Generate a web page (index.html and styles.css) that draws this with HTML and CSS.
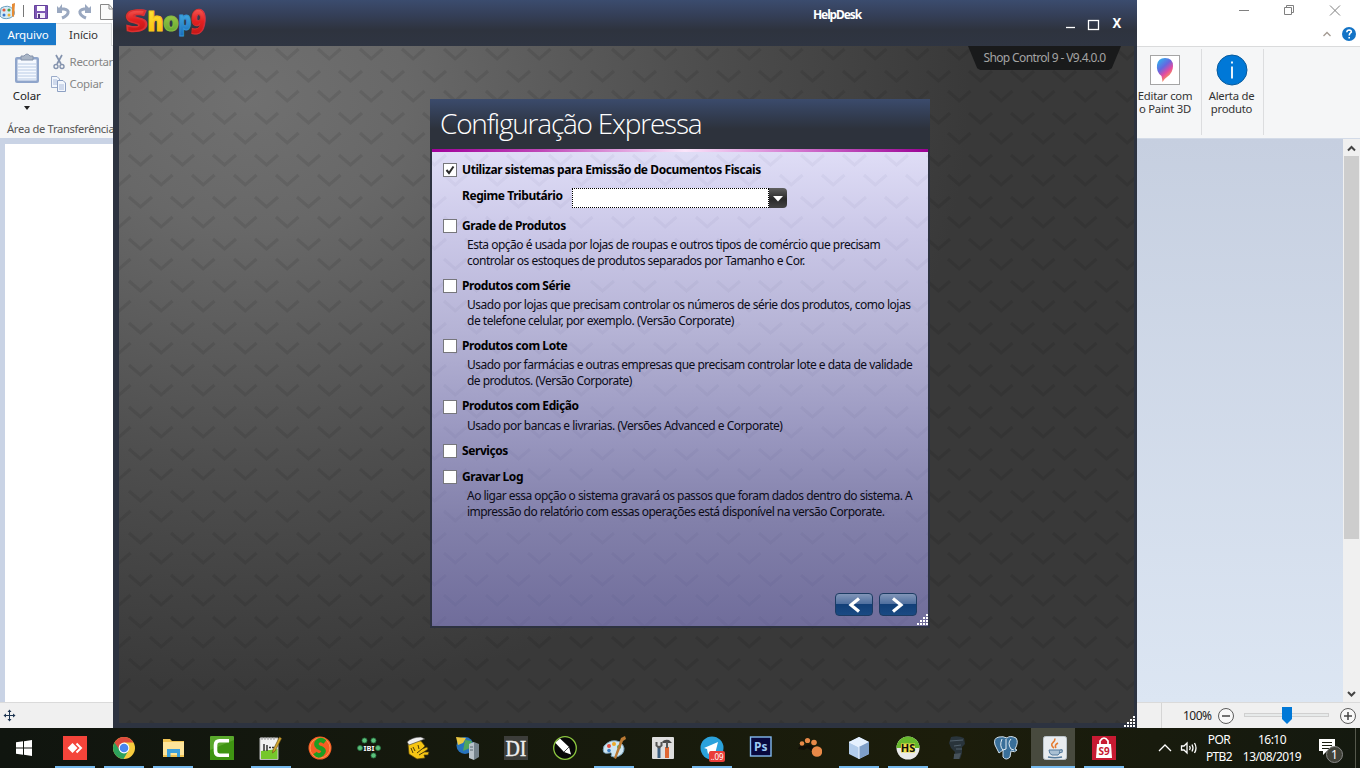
FILE: index.html
```html
<!DOCTYPE html>
<html lang="pt-BR">
<head>
<meta charset="utf-8">
<title>Shop Control 9</title>
<link rel="stylesheet" href="styles.css">
</head>
<body>
<div class="desktop">
  <div class="windows">
    <section class="paint-left">
      <div class="quickbar">
        <svg class="qi" width="113" height="23" viewBox="0 0 113 23">
          <path d="M1 8Q8 4 13 9Q17 15 10 18Q3 20 0 16Z" fill="#d5ebf6" stroke="#6a9fc0"/>
          <circle cx="4" cy="10" r="1.600" fill="#e25d3f"/><circle cx="9" cy="10" r="1.600" fill="#4aa34d"/><circle cx="4" cy="15" r="1.500" fill="#3b74c8"/><circle cx="9" cy="15" r="1.500" fill="#edb12f"/>
          <path d="M12 4L15 3L14 17L12 16Z" fill="#e58a35"/>
          <path d="M23.500 5V17" stroke="#777"/>
          <path d="M34.500 5.500H47.500V18.500H34.500Z" fill="#7e57b5" stroke="#65419b"/><rect x="37" y="6" width="8" height="5" fill="#fff"/><rect x="37" y="13" width="8" height="5" fill="#f1edf7"/><rect x="38" y="14" width="2" height="4" fill="#543982"/>
          <path d="M60 9H64Q69 10 68 13Q67 16 62 18" fill="none" stroke="#9aa8c0" stroke-width="3"/><path d="M62 4V13H57V6L59 8Z" fill="#9aa8c0"/>
          <path d="M88 9H84Q79 10 80 13Q81 16 86 18" fill="none" stroke="#9aa8c0" stroke-width="3"/><path d="M85 4V13H91V6L89 8Z" fill="#9aa8c0"/>
          <path d="M100.500 4.500H109L113 9V19.500H100.500Z" fill="#fafafa" stroke="#888"/><path d="M109 4.500V9H113" fill="none" stroke="#888"/>
        </svg>
      </div>
      <div class="tabs"><span class="tab-file">Arquivo</span><span class="tab-home">Início</span></div>
      <div class="ribbon">
        <div class="clip">
          <div class="paste">
            <svg width="26" height="32" viewBox="0 0 26 32"><rect x="1" y="4" width="24" height="26" rx="2" fill="#8fa5cb"/><rect x="3.500" y="6.500" width="19" height="21" fill="#f5f9ff"/><path d="M4 11H22M4 14H22M4 17H22M4 20H22M4 23H22M4 26H22" stroke="#b9cbe5"/><path d="M7 7V3H10Q13-1 16 3H19V7Z" fill="#a9b5c6" stroke="#8492aa"/></svg>
            <span>Colar</span>
            <svg width="6" height="4" viewBox="0 0 6 4"><path d="M0 0H6L3 4Z" fill="#222"/></svg>
          </div>
          <div class="edits">
            <div class="edit"><svg width="16" height="16" viewBox="0 0 16 16"><path d="M5 1L10 10M11 1L6 10" stroke="#8493ae" stroke-width="1.700"/><circle cx="5" cy="12.500" r="2" fill="none" stroke="#8493ae" stroke-width="1.400"/><circle cx="11" cy="12.500" r="2" fill="none" stroke="#8493ae" stroke-width="1.400"/></svg><span>Recortar</span></div>
            <div class="edit"><svg width="16" height="16" viewBox="0 0 16 16"><path d="M.5.500H6L8.500 3V11.500H.500Z" fill="#f3f7fd" stroke="#9aabc9"/><path d="M6.500 4.500H12L14.500 7V15.500H6.500Z" fill="#f3f7fd" stroke="#8da0c3"/><path d="M2 4H6M2 6H6M2 8H6M8 9H13M8 11H13M8 13H13" stroke="#a9badb"/></svg><span>Copiar</span></div>
          </div>
        </div>
        <div class="group">Área de Transferência</div>
      </div>
      <div class="canvas-l"><div class="paper"></div></div>
      <div class="status"><svg width="20" height="26" viewBox="0 0 20 26"><path d="M4 12.500H15M9.500 7V18" stroke="#1d3552"/><path d="M7.500 9L9.500 6.500L11.500 9ZM7.500 16L9.500 18.500L11.500 16ZM6 10.500L3.500 12.500L6 14.500ZM13 10.500L15.500 12.500L13 14.500Z" fill="#1d3552"/></svg></div>
    </section>

    <section class="shop">
      <header class="shop-head">
        <svg class="logo" width="86" height="40" viewBox="0 0 86 40">
          <defs>
            <linearGradient id="lr" x2="0" y2="1"><stop stop-color="#ff8a80"/><stop offset=".5" stop-color="#e42020"/><stop offset="1" stop-color="#b01010"/></linearGradient>
            <linearGradient id="ly" x2="0" y2="1"><stop stop-color="#fff04a"/><stop offset="1" stop-color="#f9b400"/></linearGradient>
            <linearGradient id="lg" x2="0" y2="1"><stop stop-color="#c5dc50"/><stop offset="1" stop-color="#4b9d2c"/></linearGradient>
            <linearGradient id="lb" x2="0" y2="1"><stop stop-color="#57c8f2"/><stop offset="1" stop-color="#1567b8"/></linearGradient>
          </defs>
          <g class="logo-text">
            <text x="1" y="26" font-size="29" textLength="22" lengthAdjust="spacingAndGlyphs" fill="url(#lr)" stroke="#dc3030" stroke-width="1.500" transform="rotate(-4 12 16)">S</text>
            <text x="23.500" y="26" font-size="27" textLength="16" lengthAdjust="spacingAndGlyphs" fill="url(#ly)" stroke="#fac81a" stroke-width="1.200">h</text>
            <text x="39" y="25.500" font-size="26" textLength="16" lengthAdjust="spacingAndGlyphs" fill="url(#lg)" stroke="#86bb42" stroke-width="1">o</text>
            <text x="54.500" y="25" font-size="26" textLength="13" lengthAdjust="spacingAndGlyphs" fill="url(#lb)" stroke="#3294d8" stroke-width="1">p</text>
            <text x="66.500" y="29" font-size="34" textLength="15" lengthAdjust="spacingAndGlyphs" fill="url(#lr)" stroke="#dc3030" stroke-width="1" transform="rotate(5 74 17)">9</text>
          </g>
        </svg>
        <span class="helpdesk">HelpDesk</span>
        <svg class="winbtns" width="60" height="20" viewBox="0 0 60 20"><path d="M2 15.500H11" stroke="#fff" stroke-width="1.300"/><rect x="24.500" y="8.500" width="10" height="9" fill="none" stroke="#fff" stroke-width="1.300"/></svg>
        <span class="winx">X</span>
      </header>
      <div class="stage">
        <div class="ver"><span>Shop Control 9 - V9.4.0.0</span></div>
        <div class="dialog">
          <h1><span>Configuração Expressa</span></h1>
          <div class="stripe"></div>
          <div class="dbody">
            <div class="opt first"><i class="cb"><svg width="12" height="12" viewBox="0 0 12 12"><path d="M2.500 6L5 9L9.500 2.500" fill="none" stroke="#2b2b2b" stroke-width="2"/></svg></i><b>Utilizar sistemas para Emissão de Documentos Fiscais</b></div>
            <div class="regime"><b>Regime Tributário</b><div class="field"></div><div class="drop"><svg width="10" height="6" viewBox="0 0 10 6"><path d="M0 0H10L5 5.500Z" fill="#fff"/></svg></div></div>
            <div class="opt grade"><i class="cb"></i><b>Grade de Produtos</b></div>
            <p><span>Esta opção é usada por lojas de roupas e outros tipos de comércio que precisam</span><span>controlar os estoques de produtos separados por Tamanho e Cor.</span></p>
            <div class="opt"><i class="cb"></i><b>Produtos com Série</b></div>
            <p><span>Usado por lojas que precisam controlar os números de série dos produtos, como lojas</span><span>de telefone celular, por exemplo. (Versão Corporate)</span></p>
            <div class="opt"><i class="cb"></i><b>Produtos com Lote</b></div>
            <p class="lote"><span>Usado por farmácias e outras empresas que precisam controlar lote e data de validade</span><span>de produtos. (Versão Corporate)</span></p>
            <div class="opt edicao"><i class="cb"></i><b>Produtos com Edição</b></div>
            <p><span>Usado por bancas e livrarias. (Versões Advanced e Corporate)</span></p>
            <div class="opt"><i class="cb"></i><b>Serviços</b></div>
            <div class="opt gravar"><i class="cb"></i><b>Gravar Log</b></div>
            <p class="log"><span>Ao ligar essa opção o sistema gravará os passos que foram dados dentro do sistema. A</span><span>impressão do relatório com essas operações está disponível na versão Corporate.</span></p>
            <div class="nav">
              <div class="nbtn"><svg width="14" height="16" viewBox="0 0 14 16"><path d="M12 1.500L4 8L12 14.500" fill="none" stroke="#fff" stroke-width="3.200"/></svg></div>
              <div class="nbtn"><svg width="14" height="16" viewBox="0 0 14 16"><path d="M2 1.500L10 8L2 14.500" fill="none" stroke="#fff" stroke-width="3.200"/></svg></div>
            </div>
          </div>
          <svg class="grip" width="12" height="12" viewBox="0 0 12 12"><path d="M10 1h2M10 4h2M7 4h2M10 7h2M7 7h2M4 7h2M10 10h2M7 10h2M4 10h2M1 10h2" stroke="#fff" stroke-width="2"/></svg>
        </div>
      </div>
      <svg class="grip" width="12" height="12" viewBox="0 0 12 12"><path d="M10 1h2M10 4h2M7 4h2M10 7h2M7 7h2M4 7h2M10 10h2M7 10h2M4 10h2M1 10h2" stroke="#fff" stroke-width="2"/></svg>
    </section>

    <section class="paint-right">
      <svg class="caption" width="223" height="46" viewBox="0 0 223 46"><g fill="none" stroke="#808080"><path d="M102 10.500H112M147.500 7.500H154.500V14.500H147.500ZM149.500 7V5.500H156.500V12.500H155M193 5.500L203 15.500M203 5.500L193 15.500"/><path d="M186.500 36L190 32.500L193.500 36" stroke="#a39a92" stroke-width="1.300"/></g><circle cx="212" cy="34" r="7" fill="#1373c6"/><path d="M209.800 32.200Q210 30 212.200 30Q214.500 30.200 214.300 32.200Q212.200 33.700 212.200 35.500M212.200 37V38.600" fill="none" stroke="#fff" stroke-width="1.600"/></svg>
      <div class="ribbon-r">
        <div class="tool t3d"><svg width="32" height="32" viewBox="0 0 32 32"><defs><linearGradient id="p3" x1="0" y1="0" x2=".6" y2="1"><stop stop-color="#22c3f0"/><stop offset=".45" stop-color="#6667e0"/><stop offset=".7" stop-color="#e44ba0"/><stop offset="1" stop-color="#ffb13b"/></linearGradient></defs><rect x="1.500" y="1.500" width="29" height="29" fill="#fff" stroke="#a5a5a5"/><path d="M16 4Q24 4 24 12Q24 19 18 23Q15 25 13.500 28Q13 24 12.500 22Q7 18 8 11Q9 4 16 4Z" fill="url(#p3)"/></svg><span>Editar com<br>o Paint 3D</span></div>
        <div class="tool alerta"><svg width="32" height="32" viewBox="0 0 32 32"><circle cx="16" cy="16" r="15" fill="#0078d7" stroke="#075a9d"/><path d="M16 12.500V24.500M16 7.500V9.500" stroke="#fff" stroke-width="1.800"/></svg><span>Alerta de<br>produto</span></div>
      </div>
      <div class="canvas-r"><div class="void"></div><div class="sb"><svg width="17" height="18" viewBox="0 0 17 18"><path d="M5 11.500L8.500 8L12 11.500" fill="none" stroke="#444" stroke-width="2"/></svg><div class="thumb"></div><svg width="17" height="18" viewBox="0 0 17 18"><path d="M5 8L8.500 11.500L12 8" fill="none" stroke="#444" stroke-width="2"/></svg></div></div>
      <div class="status zoombar"><span>100%</span><svg width="147" height="26" viewBox="0 0 147 26"><g fill="#f8f8f8" stroke="#5c5c5c"><circle cx="14" cy="13" r="7.500"/><circle cx="136" cy="13" r="7.500"/></g><path d="M10 13H18M132 13H140M136 9V17" stroke="#444" stroke-width="1.500"/><rect x="32.500" y="10.500" width="84" height="3" fill="#e7eaea" stroke="#d0d0d0"/><path d="M70 4H80V16L75 21L70 16Z" fill="#0078d7"/></svg></div>
    </section>
  </div>

  <footer class="taskbar">
    <div class="start"><svg width="16" height="16" viewBox="0 0 16 16"><path d="M0 2.300L7 1.300V7.500H0ZM8 1.200L16 0V7.500H8ZM0 8.500H7V14.700L0 13.700ZM8 8.500H16V16L8 14.800Z" fill="#fff"/></svg></div>
    <div class="cell on"><svg viewBox="0 0 24 24"><rect width="24" height="24" fill="#f4443a"/><path d="M4.500 12L9.500 7L14.500 12L9.500 17Z" fill="#fff"/><path d="M13.500 7.500L18 12L13.500 16.500" fill="none" stroke="#fff" stroke-width="2"/></svg></div>
    <div class="cell on"><svg viewBox="0 0 24 24"><circle cx="12" cy="12" r="11" fill="#f7cb3e"/><path d="M12 12L2.500 6.500A11 11 0 0 1 21.500 6.500H12Z" fill="#dd4b3e"/><path d="M2.500 6.500A11 11 0 0 0 11.500 23L16.500 14.500L12 12Z" fill="#2da15c"/><path d="M2.500 6.500L7 13V9L12 6.500Z" fill="#dd4b3e"/><circle cx="12" cy="12" r="5.400" fill="#fff"/><circle cx="12" cy="12" r="4.300" fill="#4a86f0"/></svg></div>
    <div class="cell on"><svg viewBox="0 0 24 24"><path d="M2 3H9L11 5H23V21H2Z" fill="#f0c454"/><path d="M2 6H23V19H2Z" fill="#fde49a"/><path d="M6 21V13H19V21H16V17H9.500V21Z" fill="#3da0dc"/></svg></div>
    <div class="cell"><svg viewBox="0 0 24 24"><rect width="24" height="24" rx="1" fill="#5aa82c"/><path d="M0 24V14L24 4V24Z" fill="#3f9412"/><path d="M19 4.800H9.500Q5.500 4.800 5.500 9V15Q5.500 19.200 9.500 19.200H19" fill="none" stroke="#fff" stroke-width="3.600"/></svg></div>
    <div class="cell on"><svg viewBox="0 0 24 24"><path d="M1 2H19V23.500H1Z" fill="#f2f2f2" stroke="#b9b9b9"/><path d="M2 15L18.500 13V23H2Z" fill="#75c72b"/><path d="M3 1V4M6 1V4M9 1V4M12 1V4M15 1V4" stroke="#9a9a9a"/><path d="M5 8V15M8 9V15M10 11.500H12M13 11.500H15" stroke="#333" stroke-width="1.500"/><path d="M20.500 1L22.500 2.500L16 15L13.500 17L14 14Z" fill="#d6a82e" stroke="#6f5419" stroke-width=".7"/></svg></div>
    <div class="cell"><svg viewBox="0 0 24 24"><circle cx="12" cy="12" r="11.500" fill="#f45e22"/><circle cx="12" cy="12" r="10" fill="none" stroke="#ff9454"/><path d="M17 6Q12 2 9 6Q7 10 12 12Q18 14 14 18Q10 21 7 17" fill="none" stroke="#1d9d22" stroke-width="4.500"/></svg></div>
    <div class="cell"><svg viewBox="0 0 24 24"><g fill="#5cc07c" stroke="#2a7a45" stroke-width=".8"><circle cx="7.500" cy="4.500" r="2.500"/><circle cx="16.500" cy="4.500" r="2.500"/><circle cx="3" cy="12" r="2.500"/><circle cx="21" cy="12" r="2.500"/><circle cx="16.500" cy="19.500" r="2.500"/></g><text x="12" y="14.800" font-size="7.500" text-anchor="middle" class="t-bold" fill="#fff">IBI</text></svg></div>
    <div class="cell"><svg viewBox="0 0 24 24"><path d="M2 8L10 4L15 5L19 10L16 13L21 11L22 13L18 16L23 16L22 19L18 19L19 22L11 23L3 18Z" fill="#f5c514" stroke="#53400b" stroke-width=".7"/><path d="M1 6Q6 1 15 1L19 3L3 9Z" fill="#eee" stroke="#333" stroke-width=".6"/><path d="M7 11L9 15M12 9L13 13M16 13L11 17M18 16L13 19M5 12L7 17" stroke="#4b3a0b" stroke-width="1"/></svg></div>
    <div class="cell"><svg viewBox="0 0 24 24"><circle cx="10" cy="9.500" r="8.500" fill="#2773bd"/><path d="M1 1L11 2L8 7L3 9Z" fill="#eac742"/><path d="M10 4L17 5L15 12L8 15Z" fill="#4fa65d"/><path d="M14 8L19 6V24L14 22Z" fill="#b9c3ca"/><path d="M19 6L24 8V21L19 24Z" fill="#75838c"/><path d="M15 11H18M15 14H18" stroke="#596870"/></svg></div>
    <div class="cell"><svg viewBox="0 0 24 24"><rect width="24" height="24" fill="#3c3d3a"/><text x="12" y="20" font-size="24" text-anchor="middle" textLength="21" lengthAdjust="spacingAndGlyphs" class="t-serif" fill="#eee" stroke="#eee" stroke-width=".4">DI</text></svg></div>
    <div class="cell"><svg viewBox="0 0 24 24"><circle cx="12" cy="12" r="11.300" fill="#080808" stroke="#8cc63f" stroke-width="1.300"/><path d="M3 6L7 2.500L16 11L18 18.500L11 16L2.500 7Z" fill="#fff"/><path d="M11 16L16 11" stroke="#222" stroke-width=".8"/></svg></div>
    <div class="cell on"><svg viewBox="0 0 24 24"><path d="M2 10Q9 2 18 6Q25 12 20 18Q14 23 9 20Q11 16 7 17Q-1 19 2 10Z" fill="#cfe6f2" stroke="#789fb7"/><circle cx="7" cy="10" r="2" fill="#e34d41"/><circle cx="12" cy="8" r="2" fill="#edaa29"/><circle cx="17" cy="11" r="2" fill="#4bad56"/><circle cx="7" cy="14.500" r="1.800" fill="#397bc1"/><path d="M19 2L23 0L24 3L21 5L14 23L12 22Z" fill="#ba7933"/></svg></div>
    <div class="cell"><svg viewBox="0 0 24 24"><rect x="1" y="1" width="22" height="22" rx="1" fill="#dedede"/><path d="M8 11V22" stroke="#3c5f80" stroke-width="3"/><path d="M5.500 6V9.500L8 11.500L10.500 9.500V6" fill="none" stroke="#555" stroke-width="2"/><path d="M16 11V22" stroke="#df6531" stroke-width="4"/><path d="M11 6Q13 3 18 4L21 7H12Z" fill="#4a4a4a"/><path d="M16 6V12" stroke="#555" stroke-width="2"/></svg></div>
    <div class="cell on"><svg viewBox="0 0 24 24"><circle cx="12" cy="12" r="11.500" fill="#2ba2dc"/><path d="M4 12L18 6L15 18L11 15L8 18L7 13Z" fill="#fff"/></svg><em>..09</em></div>
    <div class="cell"><svg viewBox="0 0 24 24"><rect x="1.500" y="1" width="20.500" height="19" fill="#08083e" stroke="#84b9ee" stroke-width="1.400"/><text x="11.800" y="15" font-size="12" text-anchor="middle" class="t-bold" fill="#9cc9f3">Ps</text></svg></div>
    <div class="cell"><svg viewBox="0 0 24 24"><path d="M0 13Q3 7 7 10Q12 6 16 12L14 15L9 12L6 14Z" fill="#100e08"/><g fill="#e88948"><circle cx="4" cy="7.500" r="2.300"/><circle cx="9.500" cy="4.500" r="2.600"/><circle cx="16" cy="6.500" r="2.800"/><circle cx="19" cy="15.500" r="5.300"/></g></svg></div>
    <div class="cell on"><svg viewBox="0 0 24 24"><path d="M12 1L22 6V18L12 23L2 18V6Z" fill="#b3cdec"/><path d="M12 1L22 6L12 11L2 6Z" fill="#e5f1ff"/><path d="M12 11L22 6V18L12 23Z" fill="#7e9fc8"/><path d="M2 6L12 11V23" fill="none" stroke="#edf5ff"/></svg></div>
    <div class="cell on"><svg viewBox="0 0 24 24"><circle cx="12" cy="12" r="11.500" fill="#e9e9e9"/><path d="M.5 12A11.500 11.500 0 0 1 23.500 12Z" fill="#67b82c"/><rect x="5" y="7.500" width="14" height="9" fill="#eddb46"/><text x="12" y="16" font-size="11" text-anchor="middle" class="t-bold" fill="#111">HS</text></svg></div>
    <div class="cell"><svg viewBox="0 0 24 24"><path d="M6 1Q13-1 19 2L20 8L17 11V17L15 23H8L10 16L6 12L4 7Z" fill="#29343b"/><path d="M5 5L18 4M9 10L16 9M11 13H17" stroke="#52616c" stroke-width="1.200"/><path d="M9 18L16 17L14 23H9Z" fill="#465159"/></svg></div>
    <div class="cell"><svg viewBox="0 0 24 24"><path d="M5 1Q-1 2 1 9L5 17L9 14V21Q12 25 16 21L17 15Q21 17 23 14L21 13Q25 6 22 2Q16-1 13 2Q9 0 5 1Z" fill="#396f99" stroke="#d0dfeb"/><path d="M8 3Q5 10 9 14L12 13V3M17 3Q13 7 17 13L20 14" fill="none" stroke="#e1ebf2"/></svg></div>
    <div class="cell on active"><svg viewBox="0 0 24 24"><rect x=".5" y=".5" width="23" height="23" rx="2" fill="#e8ecef" stroke="#bcc5cb"/><path d="M11 12Q7 9 10 6.500Q12 5 12 2.500M13 12Q11 9 15 7" fill="none" stroke="#e67b2f" stroke-width="1.600"/><path d="M6 14H17Q17 18 15 19H9Q6 18 6 14Z" fill="#a9c0d3" stroke="#547b9d"/><path d="M17 14Q20 13 19 16L16 17M5 21Q12 22.500 19 21" fill="none" stroke="#547b9d" stroke-width="1.300"/></svg></div>
    <div class="cell on"><svg viewBox="0 0 24 24"><rect width="24" height="24" fill="#c71a32"/><path d="M5 8H19L20 22H4Z" fill="#fff"/><path d="M8 10V5Q12-1 16 5V10" fill="none" stroke="#fff" stroke-width="1.700"/><text x="12" y="19" font-size="10" text-anchor="middle" class="t-bold" fill="#c71a32">S9</text></svg></div>
    <div class="tray">
      <svg width="44" height="20" viewBox="0 0 44 20"><g fill="none" stroke="#fff" stroke-width="1.300"><path d="M1 13L7 7L13 13"/><path d="M23.500 8H26L29 5V15L26 12H23.500Z"/><path d="M31.500 8Q33 10 31.500 12M34 6.500Q36 10 34 13.500M36.500 5Q39.500 10 36.500 15"/></g></svg>
      <div class="lang">POR<br>PTB2</div>
      <div class="clock">16:10<br>13/08/2019</div>
      <svg width="28" height="28" viewBox="0 0 28 28"><path d="M1 2H17V14H9L5 18V14H1Z" fill="#fff"/><path d="M4 5.500H14M4 8.500H14M4 11.500H11" stroke="#1b1e12"/><circle cx="16.500" cy="17.500" r="8" fill="#414239" stroke="#888"/><text x="16.500" y="22" font-size="12" text-anchor="middle" class="t-ui" fill="#fff">1</text></svg>
      <div class="peek"></div>
    </div>
  </footer>
</div>
</body>
</html>
```
FILE: styles.css
```css
* { box-sizing: border-box; }
body { margin: 0; overflow: hidden; font-family: "Noto Sans", "Open Sans", sans-serif; font-size: 12px; color: #333; }
svg { display: block; flex: none; }
.desktop { width: 1360px; height: 768px; display: flex; flex-direction: column; }
.windows { height: 728px; display: grid; grid-template-columns: 113px 1024px 223px; }

/* Paint, visible on the left */
.paint-left { overflow: hidden; display: flex; flex-direction: column; background: #fff; }
.quickbar { height: 23px; flex: none; }
.tabs { height: 23px; flex: none; display: flex; line-height: 23px; font-size: 11.500px; letter-spacing: -.1px; border-bottom: 1px solid #dadbdc; }
.tab-file { width: 56px; text-align: center; background: #1979ca; color: #fff; }
.tab-home { width: 56px; height: 23px; text-align: center; background: #f5f6f7; border-right: 1px solid #dadbdc; border-top: 1px solid #dadbdc; line-height: 22px; }
.ribbon { height: 92px; flex: none; background: #f5f6f7; display: flex; flex-direction: column; justify-content: space-between; white-space: nowrap; }
.clip { display: flex; padding-top: 7px; }
.paste { width: 51px; padding-left: 3px; display: flex; flex-direction: column; align-items: center; font-size: 11.500px; letter-spacing: -.1px; color: #222; }
.paste span { line-height: 16px; margin-top: 3px; }
.paste svg:last-child { margin-top: 2px; }
.edits { color: #868686; font-size: 11.500px; letter-spacing: -.35px; }
.edit { display: flex; gap: 3px; height: 22px; line-height: 18px; }
.edit svg { margin-top: 1px; }
.group { padding-left: 7px; line-height: 18px; height: 18px; font-size: 11.200px; letter-spacing: -.32px; color: #555; }
.canvas-l { flex: 1; background: #c9d3e5; padding: 6px 0 0 5px; }
.paper { height: 100%; background: #fff; }
.status { height: 26px; flex: none; background: #f0f0f0; border-top: 1px solid #dadada; }

/* Shop 9 main window */
.shop { position: relative; background: #2d3340; padding: 0 3px 5px 6px; display: flex; flex-direction: column; }
.shop-head { height: 46px; margin: 0 -3px 0 -6px; padding-left: 11px; background: linear-gradient(#3b4c6e 0, #35405a 30%, #2e333e 65%, #2f3542 100%); display: flex; color: #fff; }
.logo { margin-top: 5px; }
.logo-text { font-family: "Open Sans", sans-serif; font-weight: 800; }
.helpdesk { margin-left: 603px; margin-top: 6px; line-height: 18px; font-weight: 700; letter-spacing: -1.100px; width: 49px; white-space: nowrap; }
.winbtns { margin-left: 202px; margin-top: 12px; }
.winx { margin-left: -12px; margin-top: 12px; line-height: 20px; font-size: 14.500px; font-weight: 700; transform: scaleX(.9); }
.stage { flex: 1; display: flex; flex-direction: column; align-items: flex-start;
  background: url("data:image/svg+xml,%3Csvg xmlns='http://www.w3.org/2000/svg' width='42' height='42'%3E%3Cpath d='M10 25L21.500 35L33 25M-11 3L0 13L11.500 3M31 3L42.500 13L53 3' fill='none' stroke='%23000' stroke-opacity='.085' stroke-width='3.200'/%3E%3C/svg%3E") 0 0, radial-gradient(ellipse 720px 600px at 130px 50px, #707070 0, #686868 22%, #4e4e4e 62%, #393939 100%); }
.ver { align-self: flex-end; margin-right: 13px; width: 153px; height: 24px; line-height: 24px; text-align: center; background: #191a1b; color: #a4a4a4; clip-path: polygon(0 0, 100% 0, 94% 93%, 92% 100%, 8% 100%, 6% 93%); letter-spacing: -.63px; white-space: nowrap; }
.grip { position: absolute; right: 2px; bottom: 0; }

/* Wizard dialog */
.dialog { position: relative; width: 500px; height: 529px; margin: 29px 0 0 311px; border: 2px solid #2d3240; border-top: 0; display: flex; flex-direction: column; background: #2d3240; }
.dialog .grip { right: 0; bottom: 0; }
h1 { margin: 0 -2px; height: 50px; flex: none; padding-left: 10px; background: linear-gradient(#3b4b6c 0, #323c50 35%, #2d323c 60%, #2d323c); color: #fff; font: 300 28px/48px "Open Sans", sans-serif; letter-spacing: -1.220px; white-space: nowrap; }
.stripe { height: 3px; flex: none; background: linear-gradient(90deg, #a0009a, #c048b8 22%, #fae4fa 51%, #d070cc 75%, #9a0094); }
.dbody { flex: 1; position: relative; padding: 10px 0 0 11px; color: #0c0c18;
  background: url("data:image/svg+xml,%3Csvg xmlns='http://www.w3.org/2000/svg' width='42' height='42'%3E%3Cpath d='M10 25L21.500 35L33 25M-11 3L0 13L11.500 3M31 3L42.500 13L53 3' fill='none' stroke='%23201850' stroke-opacity='.04' stroke-width='3.200'/%3E%3C/svg%3E") -19px -22px, linear-gradient(#dfddf6 0, #cbc8e8 17%, #b5b3d5 38%, #9b99c1 58%, #8280aa 78%, #706d9b 100%); }
.opt { display: flex; gap: 5px; height: 16px; line-height: 16px; margin-top: 9px; white-space: nowrap; }
.opt.first { margin-top: 0; }
.dbody b { font-weight: 700; letter-spacing: -.42px; color: #000; }
.cb { width: 14px; height: 14px; margin-top: 1px; background: #fff; border: 1px solid #77777c; }
.regime { display: flex; height: 20px; margin-top: 10px; line-height: 16px; }
.regime b { width: 110px; padding-left: 19px; margin-right: 19px; white-space: nowrap; }
.field { width: 197px; background: #fff; border: 1px dotted #000; }
.drop { width: 18px; background: linear-gradient(#606060, #292929 55%, #444); border-radius: 0 4px 4px 0; display: flex; align-items: center; justify-content: center; padding-top: 2px; }
.opt.grade, .opt.edicao, .opt.gravar { margin-top: 10px; }
.opt.edicao b { margin-top: -1px; }
.dbody p { margin: 3px 0 0 24px; line-height: 16px; letter-spacing: -.49px; }
.dbody p.lote { letter-spacing: -.515px; }
.dbody p.log { letter-spacing: -.525px; }
.dbody p span { display: block; white-space: nowrap; }
.nav { display: flex; gap: 6px; margin: 73px 11px 0 0; justify-content: flex-end; }
.nbtn { width: 38px; height: 23px; border: 1px solid #1d3c63; border-radius: 4px; background: linear-gradient(#8195b8, #4e6e9e 48%, #123f78 50%, #1a4a83); display: flex; align-items: center; justify-content: center; }

/* Paint, visible on the right */
.paint-right { display: flex; flex-direction: column; background: #fff; overflow: hidden; }
.caption { height: 46px; }
.ribbon-r { height: 92px; flex: none; border-top: 1px solid #dadbdc; background: #f5f6f7; display: flex; padding: 2px 0 3px; }
.tool { display: flex; flex-direction: column; align-items: center; padding-top: 5px; text-align: center; line-height: 13px; font-size: 11.300px; letter-spacing: -.25px; border-right: 1px solid #dcdddf; white-space: nowrap; }
.tool span { margin-top: 3px; }
.t3d { width: 65px; padding-right: 8px; }
.alerta { width: 62px; padding-right: 2px; }
.canvas-r { flex: 1; display: flex; border-top: 1px solid #d3dbe8; }
.void { width: 206px; background: linear-gradient(#c6cfe0, #dce6f3); }
.sb { width: 17px; background: #f0f0f0; display: flex; flex-direction: column; justify-content: space-between; }
.thumb { width: 15px; height: 383px; margin: -1px 1px auto; background: #cdcdcd; }
.zoombar { display: flex; color: #222; }
.zoombar span { margin-left: 24px; border-left: 1px solid #d5d5d5; padding-left: 21px; width: 51px; line-height: 25px; letter-spacing: -.5px; flex: none; }

/* Taskbar */
.taskbar { height: 40px; background: linear-gradient(90deg, #10150f, #171a0c 45%, #1c1d0b 70%, #14190f); display: flex; }
.start { width: 50px; padding: 12px 0 0 16px; }
.cell { position: relative; width: 49px; height: 40px; padding: 8px 0 0 13px; flex: none; }
.cell > svg { width: 24px; height: 24px; }
.cell.on { background: linear-gradient(#76b9ed, #76b9ed) 5px 38px / 40px 2px no-repeat; }
.cell.active { background: linear-gradient(#76b9ed, #76b9ed) 1px 38px / 44px 2px no-repeat, linear-gradient(#484a3e, #484a3e) 1px 0 / 44px 40px no-repeat; }
.cell em { position: absolute; left: 22px; top: 23px; width: 16px; height: 11px; background: #ea3d3a; color: #fff; border-radius: 2px; font: 8px/11px "Noto Sans", sans-serif; letter-spacing: -.2px; text-align: center; }
.t-bold { font-family: "Noto Sans", sans-serif; font-weight: 700; }
.t-serif { font-family: "Liberation Serif", serif; }
.t-ui { font-family: "Noto Sans", sans-serif; }
.tray { margin-left: auto; width: 202px; display: flex; color: #fff; line-height: 17px; text-align: center; white-space: nowrap; padding-top: 3px; }
.lang { width: 34px; letter-spacing: -.6px; }
.clock { width: 66px; margin-left: 3px; letter-spacing: -.55px; }
.tray > svg { margin-left: 13px; margin-top: 6px; }
.tray > svg:first-child { margin-left: 0; margin-top: 7px; }
.peek { width: 1px; height: 40px; margin: -3px 4px 0 auto; background: #55584c; }
```
